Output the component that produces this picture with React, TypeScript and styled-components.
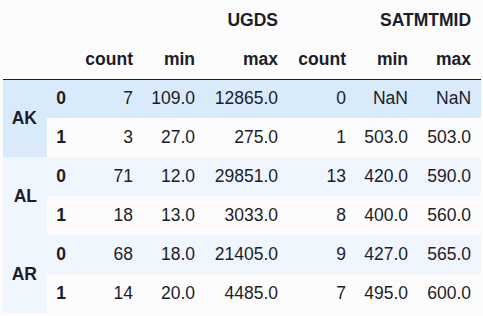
import styled, { createGlobalStyle } from "styled-components";

const GlobalStyle = createGlobalStyle`
  * {
    box-sizing: border-box;
  }
  body {
    margin: 0;
    background: #fcfcfc;
    font-family: "Liberation Sans", Arial, sans-serif;
    color: #1c1c2a;
  }
`;

type Row = {
  state: string;
  idx: number;
  values: string[];
};

const rows: Row[] = [
  { state: "AK", idx: 0, values: ["7", "109.0", "12865.0", "0", "NaN", "NaN"] },
  { state: "AK", idx: 1, values: ["3", "27.0", "275.0", "1", "503.0", "503.0"] },
  { state: "AL", idx: 0, values: ["71", "12.0", "29851.0", "13", "420.0", "590.0"] },
  { state: "AL", idx: 1, values: ["18", "13.0", "3033.0", "8", "400.0", "560.0"] },
  { state: "AR", idx: 0, values: ["68", "18.0", "21405.0", "9", "427.0", "565.0"] },
  { state: "AR", idx: 1, values: ["14", "20.0", "4485.0", "7", "495.0", "600.0"] },
];

const colWidths = [44, 29, 67, 62, 83, 68, 62, 63];
const stats = ["count", "min", "max", "count", "min", "max"];

// the first state's rows show the hover colour, the others are striped
const rowTone = (i: number) => {
  if (i < 1) return "hover";
  if (i % 2 === 0) return "stripe";
  return "plain";
};

export default function App() {
  return (
    <>
      <GlobalStyle />
      <Wrapper>
        <Frame>
          <colgroup>
            {colWidths.map((w, i) => (
              <col key={i} style={{ width: w }} />
            ))}
          </colgroup>
          <thead>
            <HeadRow $h={40}>
              <HeadCell />
              <HeadCell />
              <HeadCell colSpan={3}>UGDS</HeadCell>
              <HeadCell colSpan={3}>SATMTMID</HeadCell>
            </HeadRow>
            <HeadRow $h={39} $line>
              <HeadCell />
              <HeadCell />
              {stats.map((s, i) => (
                <HeadCell key={i}>{s}</HeadCell>
              ))}
            </HeadRow>
          </thead>
          <tbody>
            {rows.map((r, i) => (
              <BodyRow key={i} $tone={rowTone(i)}>
                {r.idx === 0 && (
                  <IndexCell rowSpan={2}>{r.state}</IndexCell>
                )}
                <IndexCell>{r.idx}</IndexCell>
                {r.values.map((v, j) => (
                  <Cell key={j}>{v}</Cell>
                ))}
              </BodyRow>
            ))}
          </tbody>
        </Frame>
      </Wrapper>
    </>
  );
}

const Wrapper = styled.div`
  padding: 0 0 0 3px;
`;

const Frame = styled.table`
  table-layout: fixed;
  width: 478px;
  border-collapse: collapse;
  border-spacing: 0;
  font-size: 17.5px;
`;

const HeadRow = styled.tr<{ $h: number; $line?: boolean }>`
  height: ${(p) => p.$h}px;
  border-bottom: ${(p) => (p.$line ? "1px solid #1c1c2a" : "none")};
`;

const HeadCell = styled.th`
  padding: 0 10px 0 0;
  text-align: right;
  vertical-align: middle;
  font-weight: bold;
  white-space: nowrap;
`;

const BodyRow = styled.tr<{ $tone: string }>`
  height: 39px;
  background: ${(p) =>
    p.$tone === "hover"
      ? "#d9ebfb"
      : p.$tone === "stripe"
      ? "#eff6fd"
      : "transparent"};
`;

const IndexCell = styled.th`
  padding: 0 10px 0 0;
  text-align: right;
  vertical-align: middle;
  font-weight: bold;
`;

const Cell = styled.td`
  padding: 0 10px 0 0;
  text-align: right;
  vertical-align: middle;
  white-space: nowrap;
`;
